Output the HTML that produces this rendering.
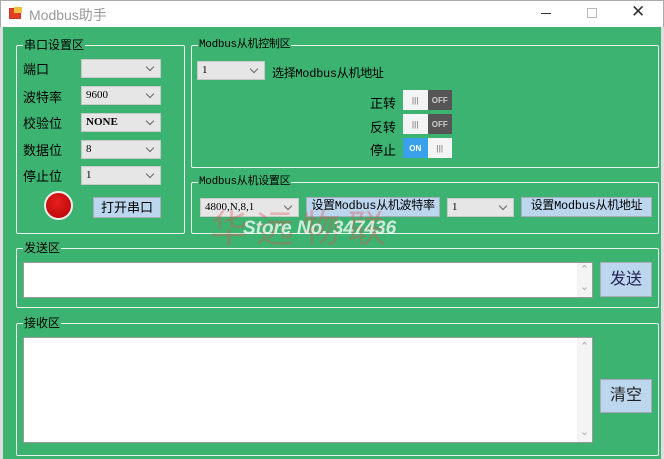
<!DOCTYPE html><html><head><meta charset="utf-8"><style>
*{margin:0;padding:0;box-sizing:border-box}
body{width:664px;height:459px;overflow:hidden;background:#fff;font-family:"Liberation Sans","Noto Sans CJK SC",sans-serif;font-size:13px;position:relative;color:#000}
.a{position:absolute}
.tb{left:0;top:0;width:664px;height:27px;background:#fff;border:1px solid #aaa;border-bottom:none}
.main{left:3px;top:27px;width:658px;height:432px;background:#3cb371}
.g{position:absolute;border:1px solid #e8f4ec;border-radius:2px}
.gt{position:absolute;top:-9px;left:6px;background:#3cb371;padding:0 1px;font-size:12px;line-height:16px}
.cb{position:absolute;background:#e6e6e6;border:1px solid #c8c8c8;height:19px;font-size:11px;font-family:"Liberation Serif","Noto Sans CJK SC",serif;line-height:17px;padding-left:4px}
.cb:after{content:"";position:absolute;right:7px;top:4px;width:5px;height:5px;border-right:1px solid #666;border-bottom:1px solid #666;transform:rotate(45deg)}
.btn{position:absolute;background:#bcd6ee;border:1px solid #aab;font-size:12px;text-align:center;line-height:17px}
.mono{font-family:"Liberation Mono","Noto Sans CJK SC",monospace;font-size:11px;letter-spacing:-0.3px}
.lb{position:absolute;font-size:13px}
.tg{position:absolute;width:49px;height:20px;display:flex;font-size:8px;font-weight:bold}
.tg span{flex:1;display:flex;align-items:center;justify-content:center}
.tx{position:absolute;background:#fff;border:1px solid #999}
.sb{position:absolute;right:0;top:0;bottom:0;width:15px;background:#f4f4f4;color:#aaa;font-size:11px;text-align:center}
</style></head><body>
<div class="a tb">
<div class="a" style="left:8px;top:7px;width:12px;height:11px;background:#e04020;border:1px solid #c33"></div>
<div class="a" style="left:13px;top:6px;width:8px;height:6px;background:#f0c040"></div>
<div class="a" style="left:28px;top:4px;color:#999;font-size:14px">Modbus助手</div>
<div class="a" style="left:540px;top:12px;width:10px;height:1px;background:#333"></div>
<div class="a" style="left:586px;top:7px;width:10px;height:10px;border:1px solid #bbb"></div>
<div class="a" style="left:630px;top:1px;font-size:17px;color:#333">✕</div>
</div>
<div class="a" style="left:0;top:27px;width:3px;height:432px;background:#ddd"></div>
<div class="a" style="left:661px;top:27px;width:3px;height:432px;background:#ddd"></div>
<div class="a main"></div>
<div class="g" style="left:16px;top:45px;width:169px;height:189px"><div class="gt">串口设置区</div></div>
<div class="lb" style="left:23px;top:59px">端口</div><div class="cb" style="left:81px;top:59px;width:80px"></div>
<div class="lb" style="left:23px;top:87px">波特率</div><div class="cb" style="left:81px;top:86px;width:80px">9600</div>
<div class="lb" style="left:23px;top:113px">校验位</div><div class="cb" style="left:81px;top:113px;width:80px;font-weight:bold">NONE</div>
<div class="lb" style="left:23px;top:140px">数据位</div><div class="cb" style="left:81px;top:140px;width:80px">8</div>
<div class="lb" style="left:23px;top:166px">停止位</div><div class="cb" style="left:81px;top:166px;width:80px">1</div>
<div class="a" style="left:44px;top:191px;width:29px;height:29px;border-radius:50%;background:radial-gradient(circle at 45% 40%,#e82020,#b00000);border:2px solid #eee"></div>
<div class="btn" style="left:93px;top:197px;width:68px;height:21px;line-height:19px;font-size:13px">打开串口</div>

<div class="g" style="left:191px;top:45px;width:468px;height:123px"><div class="gt mono">Modbus从机控制区</div></div>
<div class="cb" style="left:197px;top:61px;width:68px">1</div>
<div class="lb mono" style="left:272px;top:64px;font-size:12px">选择Modbus从机地址</div>
<div class="lb" style="left:370px;top:93px">正转</div>
<div class="tg" style="left:403px;top:90px"><span style="background:#f4f4f4;color:#999">|||</span><span style="background:#555;color:#ccc">OFF</span></div>
<div class="lb" style="left:370px;top:117px">反转</div>
<div class="tg" style="left:403px;top:114px"><span style="background:#f4f4f4;color:#999">|||</span><span style="background:#555;color:#ccc">OFF</span></div>
<div class="lb" style="left:370px;top:140px">停止</div>
<div class="tg" style="left:403px;top:138px"><span style="background:#3aa0ea;color:#fff">ON</span><span style="background:#f4f4f4;color:#999">|||</span></div>

<div class="g" style="left:191px;top:182px;width:468px;height:52px"><div class="gt mono">Modbus从机设置区</div></div>
<div class="cb" style="left:200px;top:198px;width:99px">4800,N,8,1</div>
<div class="btn mono" style="left:306px;top:197px;width:134px;height:20px;font-size:12px">设置Modbus从机波特率</div>
<div class="cb" style="left:447px;top:198px;width:67px">1</div>
<div class="btn mono" style="left:521px;top:197px;width:131px;height:20px;font-size:12px">设置Modbus从机地址</div>

<div class="a" style="left:210px;top:198px;font-size:38px;color:rgba(220,80,80,.35);letter-spacing:8px">华远物联</div>
<div class="a" style="left:243px;top:218px;font-size:19px;font-weight:bold;font-style:italic;color:rgba(255,255,255,.75);font-family:'Liberation Sans',sans-serif">Store No. 347436</div>

<div class="g" style="left:16px;top:248px;width:643px;height:60px"><div class="gt">发送区</div></div>
<div class="tx" style="left:23px;top:262px;width:570px;height:36px"><div class="sb"><div style="position:absolute;top:0;width:15px">⌃</div><div style="position:absolute;bottom:4px;width:15px">⌄</div></div></div>
<div class="btn" style="left:600px;top:262px;width:52px;height:35px;line-height:33px;font-size:16px;color:#225">发送</div>

<div class="g" style="left:16px;top:323px;width:643px;height:133px"><div class="gt">接收区</div></div>
<div class="tx" style="left:23px;top:337px;width:570px;height:106px"><div class="sb"><div style="position:absolute;top:2px;width:15px">⌃</div><div style="position:absolute;bottom:4px;width:15px">⌄</div></div></div>
<div class="btn" style="left:600px;top:379px;width:52px;height:34px;line-height:32px;font-size:16px;color:#222">清空</div>
</body></html>
